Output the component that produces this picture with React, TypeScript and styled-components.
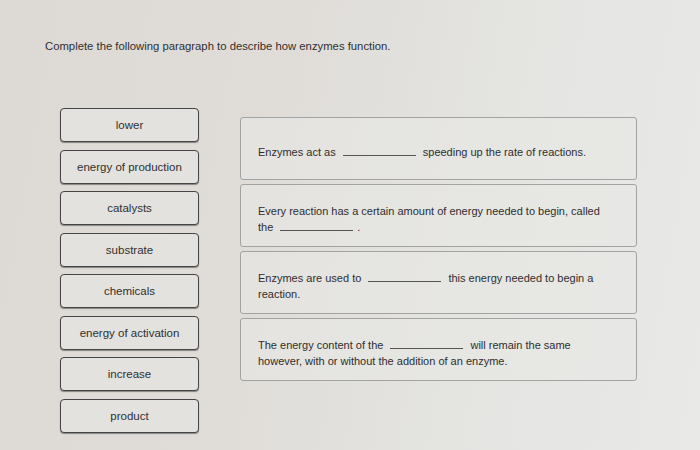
import styled, { createGlobalStyle } from "styled-components";

const GlobalStyle = createGlobalStyle`
  html, body {
    margin: 0;
    padding: 0;
    width: 700px;
    height: 450px;
    overflow: hidden;
  }
`;

const choices = [
  "lower",
  "energy of production",
  "catalysts",
  "substrate",
  "chemicals",
  "energy of activation",
  "increase",
  "product",
];

const App = () => {
  return (
    <>
      <GlobalStyle />
      <Page>
        <Title>Complete the following paragraph to describe how enzymes function.</Title>
        <Main>
          <ChoiceList>
            {choices.map((c) => (
              <Choice key={c}>{c}</Choice>
            ))}
          </ChoiceList>
          <SentenceList>
            <Sentence>
              <SentenceText>
                Enzymes act as <Blank /> speeding up the rate of reactions.
              </SentenceText>
            </Sentence>
            <Sentence>
              <SentenceText>
                <Line>Every reaction has a certain amount of energy needed to begin, called</Line>
                <Line>
                  the <Blank />.
                </Line>
              </SentenceText>
            </Sentence>
            <Sentence>
              <SentenceText>
                <Line>
                  Enzymes are used to <Blank /> this energy needed to begin a
                </Line>
                <Line>reaction.</Line>
              </SentenceText>
            </Sentence>
            <Sentence>
              <SentenceText>
                <Line>
                  The energy content of the <Blank /> will remain the same
                </Line>
                <Line>however, with or without the addition of an enzyme.</Line>
              </SentenceText>
            </Sentence>
          </SentenceList>
        </Main>
      </Page>
    </>
  );
};

export default App;

const Page = styled.div`
  width: 700px;
  height: 450px;
  box-sizing: border-box;
  padding: 39px 0 0 45px;
  background: linear-gradient(100deg, #dddad5 0%, #e0ddd9 40%, #e5e6e3 75%, #e9eae8 100%);
  font-family: "Liberation Sans", Arial, sans-serif;
  color: #2e2e2e;
`;

const Title = styled.div`
  font-size: 11.3px;
  line-height: 14px;
  color: #2f2f2f;
`;

const Main = styled.div`
  display: flex;
  align-items: flex-start;
  margin-top: 55px;
`;

const ChoiceList = styled.div`
  display: flex;
  flex-direction: column;
  gap: 7.5px;
  margin-left: 15px;
  width: 139px;
`;

const Choice = styled.div`
  height: 34px;
  box-sizing: border-box;
  display: flex;
  align-items: center;
  justify-content: center;
  border: 1px solid #454545;
  border-radius: 4px;
  background: #e3e2df;
  box-shadow: 0 1px 1px rgba(0, 0, 0, 0.4);
  font-size: 11.5px;
  color: #303030;
`;

const SentenceList = styled.div`
  display: flex;
  flex-direction: column;
  gap: 4px;
  margin-left: 41px;
  margin-top: 9px;
  width: 397px;
`;

const Sentence = styled.div`
  height: 63px;
  box-sizing: border-box;
  display: flex;
  align-items: center;
  padding: 6px 22px 0 17px;
  border: 1px solid #a3a3a1;
  border-radius: 3px;
  background: rgba(232, 232, 229, 0.6);
`;

const SentenceText = styled.div`
  font-size: 11px;
  line-height: 16px;
  color: #2e2e2e;
`;

const Line = styled.div`
  white-space: nowrap;
`;

const Blank = styled.span`
  display: inline-block;
  width: 73px;
  height: 9px;
  margin: 0 4px;
  border-bottom: 1px solid #555;
  vertical-align: baseline;
`;
